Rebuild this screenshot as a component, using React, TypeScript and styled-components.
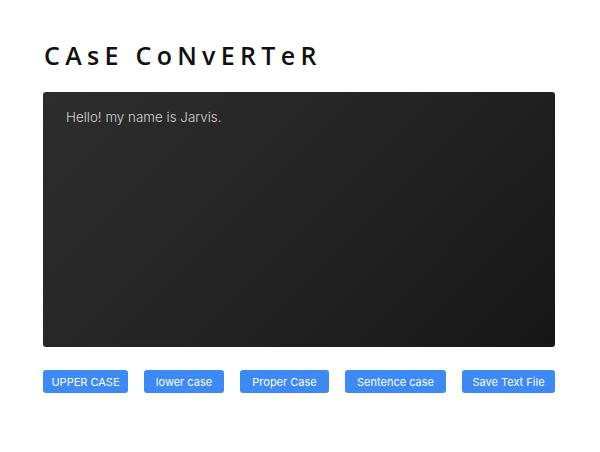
import React, { useState } from "react";
import styled, { createGlobalStyle } from "styled-components";

const Global = createGlobalStyle`
  html, body { margin: 0; padding: 0; background: #ffffff; }
  * { box-sizing: border-box; }
`;

const Page = styled.div`
  padding: 41px 45px 0 43px;
  width: 600px;
  font-family: Inter, "Noto Sans", sans-serif;
`;

const Title = styled.h1`
  margin: 0 0 23px 1px;
  font-family: "Open Sans", "Noto Sans", sans-serif;
  font-weight: 600;
  font-size: 25px;
  line-height: 28px;
  letter-spacing: 5.3px;
  color: #111111;
`;

const TextBox = styled.textarea`
  display: block;
  width: 512px;
  height: 255px;
  margin: 0;
  padding: 16px 23px;
  border: none;
  border-radius: 3px;
  resize: none;
  outline: none;
  background: linear-gradient(135deg, #2d2d2d 0%, #242424 50%, #161616 100%);
  color: #d4d4d4;
  font-family: Inter, "Noto Sans", sans-serif;
  font-weight: 300;
  font-size: 13.4px;
  line-height: 18px;
`;

const Actions = styled.div`
  display: flex;
  justify-content: space-between;
  margin-top: 23px;
  width: 512px;
`;

const Button = styled.button<{ $w: number }>`
  width: ${(p) => p.$w}px;
  height: 23px;
  padding: 0;
  border: none;
  border-radius: 3px;
  background: #3d8af7;
  color: #ffffff;
  font-family: Inter, "Noto Sans", sans-serif;
  font-size: 11px;
  font-weight: 400;
  cursor: pointer;
`;

const buttons: [string, number][] = [
  ["UPPER CASE", 85],
  ["lower case", 80],
  ["Proper Case", 89],
  ["Sentence case", 101],
  ["Save Text File", 93],
];

export default function App() {
  const [text, setText] = useState("Hello! my name is Jarvis.");
  return (
    <>
      <Global />
      <Page>
        <Title>CAsE CoNvERTeR</Title>
        <TextBox value={text} onChange={(e) => setText(e.target.value)} />
        <Actions>
          {buttons.map(([label, w]) => (
            <Button key={label} $w={w}>
              {label}
            </Button>
          ))}
        </Actions>
      </Page>
    </>
  );
}
